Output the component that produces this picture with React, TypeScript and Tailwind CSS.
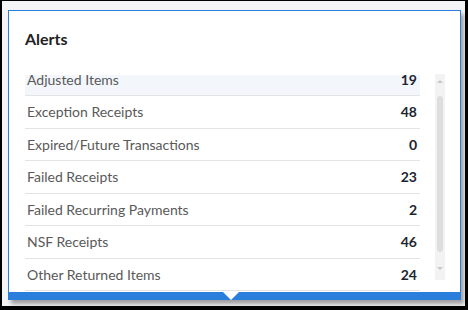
import React from "react";

const rows = [
  { label: "Adjusted Items", value: 19 },
  { label: "Exception Receipts", value: 48 },
  { label: "Expired/Future Transactions", value: 0 },
  { label: "Failed Receipts", value: 23 },
  { label: "Failed Recurring Payments", value: 2 },
  { label: "NSF Receipts", value: 46 },
  { label: "Other Returned Items", value: 24 },
];

const App = () => {
  return (
    <div
      className="w-[468px] h-[310px] bg-[#f4f4f6] border-black border-t border-l-2 border-r-[3px] border-b-4 pl-[6px] pt-[9px]"
      style={{ fontFamily: "Lato, 'Open Sans', sans-serif" }}
    >
      <div className="relative w-[453px] h-[290px] bg-white border-[#2a7fdc] border-t border-x flex flex-col shadow-[3px_4px_4px_rgba(0,0,0,0.35)]">
        <h3 className="pl-[16px] pt-[16px] text-[16px] leading-6 font-bold text-[#222]">
          Alerts
        </h3>
        <div className="flex gap-[15px] pl-[16px] pr-[15px] mt-[24px]">
          <div className="flex-1 h-[216px] overflow-hidden">
            <div className="-mt-[11.5px]">
              {rows.map((r, i) => (
                <div
                  key={r.label}
                  className={`h-[32.5px] flex items-center justify-between pl-[2px] pr-[3px] text-[14px] border-b border-[#e4e4e4] ${
                    i === 0 ? "bg-[#f3f6fb]" : ""
                  }`}
                >
                  <span className="text-[#595959]">{r.label}</span>
                  <span className="font-bold text-[#1c2633]">{r.value}</span>
                </div>
              ))}
            </div>
          </div>
          <div className="w-[10px] h-[206px] -mt-[1px] bg-[#f3f3f3] flex flex-col items-center">
            <div className="mt-[6px] w-0 h-0 border-x-[3px] border-x-transparent border-b-[3px] border-b-[#c8c8c8]" />
            <div className="mt-[13px] w-[6px] h-[156px] rounded-full bg-[#dedede]" />
            <div className="mt-[15px] w-0 h-0 border-x-[3px] border-x-transparent border-t-[3px] border-t-[#c8c8c8]" />
          </div>
        </div>
        <div className="mt-auto -mx-px h-[8px] bg-[#2a7fdc]" />
        <div className="absolute left-[214px] bottom-0 w-0 h-0 border-x-[8px] border-x-transparent border-t-[8px] border-t-white" />
      </div>
    </div>
  );
};

export default App;
